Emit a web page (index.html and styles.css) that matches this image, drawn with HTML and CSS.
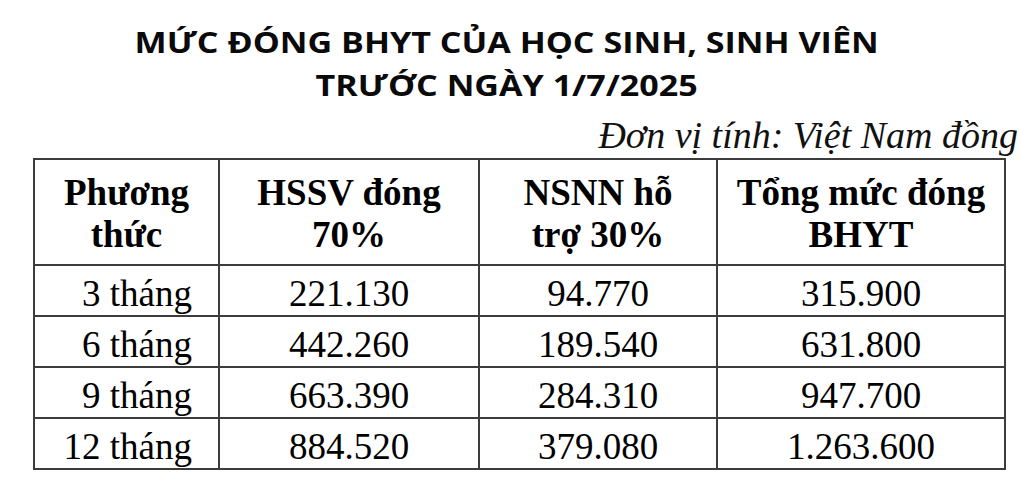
FILE: index.html
```html
<!DOCTYPE html>
<html lang="vi">
<head>
<meta charset="utf-8">
<link rel="stylesheet" href="styles.css">
</head>
<body>
<div class="page">
  <h1 class="title"><span class="title-text">MỨC ĐÓNG BHYT CỦA HỌC SINH, SINH VIÊN<br>TRƯỚC NGÀY 1/7/2025</span></h1>
  <div class="unit">Đơn vị tính: Việt Nam đồng</div>
  <table class="fees">
    <colgroup>
      <col class="c1"><col class="c2"><col class="c3"><col class="c4">
    </colgroup>
    <thead>
      <tr>
        <th>Phương<br>thức</th>
        <th>HSSV đóng<br>70%</th>
        <th>NSNN hỗ<br>trợ 30%</th>
        <th>Tổng mức đóng<br>BHYT</th>
      </tr>
    </thead>
    <tbody>
      <tr><td class="term">3 tháng</td><td>221.130</td><td>94.770</td><td>315.900</td></tr>
      <tr><td class="term">6 tháng</td><td>442.260</td><td>189.540</td><td>631.800</td></tr>
      <tr><td class="term">9 tháng</td><td>663.390</td><td>284.310</td><td>947.700</td></tr>
      <tr><td class="term">12 tháng</td><td>884.520</td><td>379.080</td><td>1.263.600</td></tr>
    </tbody>
  </table>
</div>
</body>
</html>
```

FILE: styles.css
```css
html, body {
  margin: 0;
  padding: 0;
  background: #ffffff;
}

.page {
  width: 1020px;
  height: 482px;
  box-sizing: border-box;
  padding: 20px 0 0 0;
  color: #000;
}

.title {
  margin: 0;
  font-family: "Open Sans", "Noto Sans", sans-serif;
  font-weight: 700;
  font-size: 29px;
  line-height: 43px;
  text-align: center;
  padding-right: 6px;
  color: #0a0a0a;
}

.title-text {
  display: inline-block;
  transform: scaleX(1.175);
}

.unit {
  margin-top: 9px;
  font-family: "Liberation Serif", "Times New Roman", serif;
  font-style: italic;
  font-size: 38px;
  line-height: 40px;
  text-align: right;
  padding-right: 2px;
  color: #111;
}

.fees {
  margin: 3px 0 0 33px;
  border-collapse: collapse;
  font-family: "Liberation Serif", "Times New Roman", serif;
  font-size: 37px;
  color: #000;
}

.c1 { width: 185px; }
.c2 { width: 260px; }
.c3 { width: 238px; }
.c4 { width: 288px; }

.fees th,
.fees td {
  border: 2px solid #3c3c3c;
  text-align: center;
  padding: 0;
}

.fees th {
  font-weight: 700;
  line-height: 42px;
  height: 106px;
  padding-top: 4px;
  box-sizing: border-box;
}

.fees td {
  font-weight: 400;
  line-height: 42px;
  height: 51px;
  padding-top: 6px;
  box-sizing: border-box;
}

.fees td.term {
  text-align: right;
  padding-right: 26px;
}
```
